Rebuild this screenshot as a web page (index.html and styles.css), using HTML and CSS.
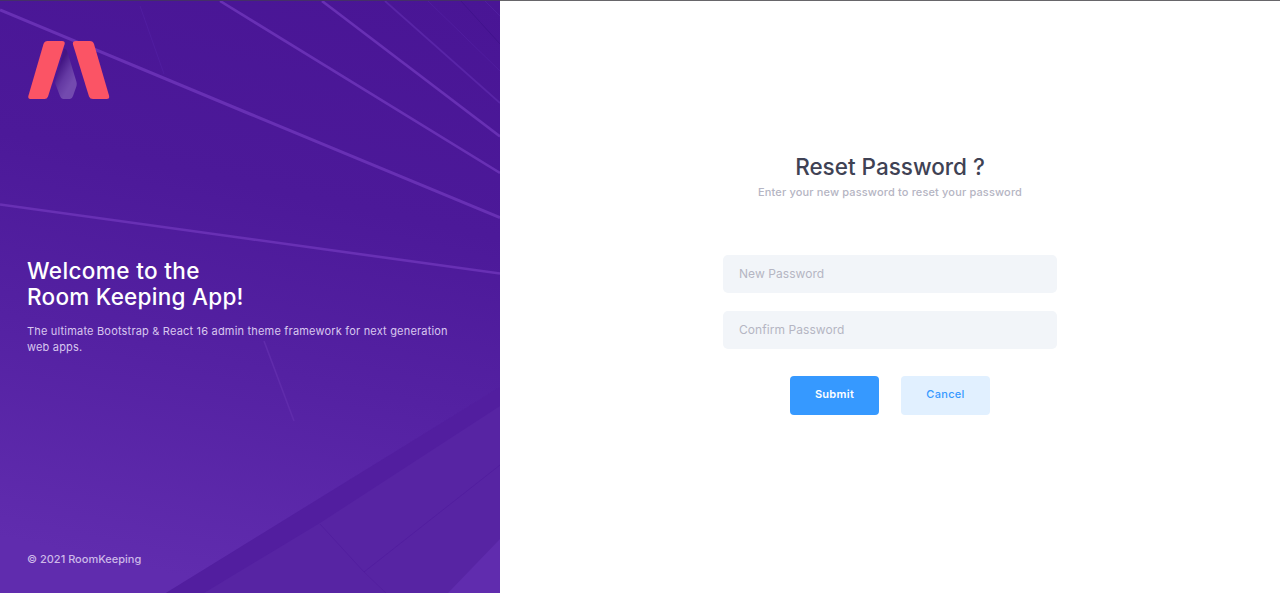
FILE: index.html
```html
<!DOCTYPE html>
<html lang="en">
<head>
<meta charset="utf-8">
<title>Reset Password</title>
<link rel="stylesheet" href="styles.css">
</head>
<body>
<div class="page">
  <aside class="aside">
    <svg class="backdrop" viewBox="0 0 500 592" preserveAspectRatio="none" aria-hidden="true">
      <path d="M166 592 500 386V592Z" fill="#5724a3"/>
      <path d="M166 592 500 386V405L320 522 204 592Z" fill="#521e9f"/>
      <path d="M448 592 500 538V592Z" fill="#602cae"/>
      <g fill="none" stroke="#6830b4" stroke-width="2.6">
        <path d="M0 9 250 113 500 216.500" stroke-width="3"/>
        <path d="M220 0 500 172"/>
        <path d="M322 0 500 135.500"/>
        <path d="M0 203.500 250 238 500 272.500"/>
        <path d="M385 0 500 102" stroke="#5925a7" stroke-width="1.800"/>
        <path d="M428 0 500 70" stroke="#501d9f" stroke-width="1"/>
        <path d="M461 0 500 43" stroke="#41138c" stroke-width="1"/>
        <path d="M485 0 500 15" stroke="#501d9f" stroke-width="1"/>
        <path d="M140 5 164 73" stroke="#501da0" stroke-width="1"/>
        <path d="M264 340 294 420" stroke="#602cac" stroke-width="1.500"/>
        <path d="M320 523 364 571 500 464" stroke="#521e9f" stroke-width="1"/>
        <path d="M364 571 386 592" stroke="#54209f" stroke-width="1"/>
      </g>
    </svg>
    <svg class="logo" viewBox="0 0 82 59" role="img" aria-label="Logo">
      <defs>
        <linearGradient id="fold" x1="29" y1="28" x2="46" y2="38" gradientUnits="userSpaceOnUse">
          <stop offset="0" stop-color="#431684"/><stop offset=".55" stop-color="#6439a3"/><stop offset="1" stop-color="#734aaf"/>
        </linearGradient>
      </defs>
      <path d="M36 8Q38 6 40 13L48.500 41Q49 43 48.500 45L45 55Q44 58 42 58H35Q33 58 32 55L27 42Z" fill="url(#fold)"/>
      <path d="M19.500 0H34Q37.500 0 36.500 3.500L20 55.500Q19 58 16.500 58H3Q-.500 58 .500 54.500L15.500 3Q16.500 0 19.500 0Z" fill="#fb5465"/>
      <path d="M48 0H62Q65 0 66 3L81 54.500Q82 58 78.500 58H65Q62 58 61 55.500L45 3.500Q44 0 48 0Z" fill="#fb5465"/>
    </svg>
    <div class="intro">
      <h1 class="welcome"><span class="welcome-first">Welcome to the</span><br><span>Room Keeping App!</span></h1>
      <p class="tagline">The ultimate Bootstrap &amp; React 16 admin theme framework for next generation<br>web apps.</p>
    </div>
    <footer class="copyright">© 2021 RoomKeeping</footer>
  </aside>
  <main class="content">
    <form class="form">
      <h2 class="title">Reset Password ?</h2>
      <p class="hint">Enter your new password to reset your password</p>
      <input class="field" type="password" placeholder="New Password" aria-label="New Password">
      <input class="field confirm" type="password" placeholder="Confirm Password" aria-label="Confirm Password">
      <div class="actions">
        <button class="btn primary" type="button">Submit</button>
        <button class="btn light" type="button">Cancel</button>
      </div>
    </form>
  </main>
</div>
</body>
</html>
```
FILE: styles.css
```css
* { box-sizing: border-box; }
body { margin: 0; font-family: Inter, "Open Sans", sans-serif; background: #fff; }
h1, h2, p { margin: 0; }
.page { display: flex; height: 593px; }
.aside {
  position: relative;
  isolation: isolate;
  display: flex;
  flex-direction: column;
  flex: 0 0 500px;
  padding: 40px 27px 26px;
  border-top: 1px solid #443068;
  color: #fff;
  background: linear-gradient(192deg, #491595 0%, #4c1999 34%, #5421a2 60%, #602cae 92%);
}
.backdrop { position: absolute; inset: 0; width: 100%; height: 100%; z-index: -1; }
.logo { width: 82px; height: 59px; margin-left: 1px; }
.intro { margin-top: 158px; }
.welcome { font-size: 22.5px; line-height: 26px; font-weight: 500; letter-spacing: .27px; white-space: nowrap; }
.welcome-first { letter-spacing: .38px; }
.tagline { margin-top: 13px; font-size: 11px; line-height: 16px; letter-spacing: .19px; color: #d8c7ef; white-space: nowrap; }
.copyright { margin-top: auto; font-size: 11px; line-height: 16px; font-weight: 500; color: #cdb9e9; }
.content { flex: 1; display: flex; justify-content: center; border-top: 1px solid #67666a; }
.form { width: 334px; padding-top: 151px; display: flex; flex-direction: column; }
.title { font-size: 22.5px; line-height: 30px; font-weight: 450; color: #3f4254; text-align: center; white-space: nowrap; }
.hint { margin-top: 1px; font-size: 11px; line-height: 18px; font-weight: 500; letter-spacing: .15px; color: #b5b5c3; text-align: center; white-space: nowrap; }
.field { width: 100%; height: 38px; margin-top: 54px; padding: 0 16px 2px; border: 0; border-radius: 5px; background: #f2f5f9; font: 400 12px Inter, sans-serif; letter-spacing: .06px; }
.field::placeholder { color: #b5b5c3; opacity: 1; }
.confirm { margin-top: 18px; }
.actions { display: flex; justify-content: center; gap: 22px; margin-top: 27px; }
.btn { width: 89px; height: 39px; padding: 0 0 3px; border: 0; border-radius: 4px; font: 500 11px Inter, sans-serif; letter-spacing: .3px; }
.primary { background: #3699ff; color: #fff; font-weight: 600; }
.light { background: #e1f0ff; color: #3699ff; }
```
